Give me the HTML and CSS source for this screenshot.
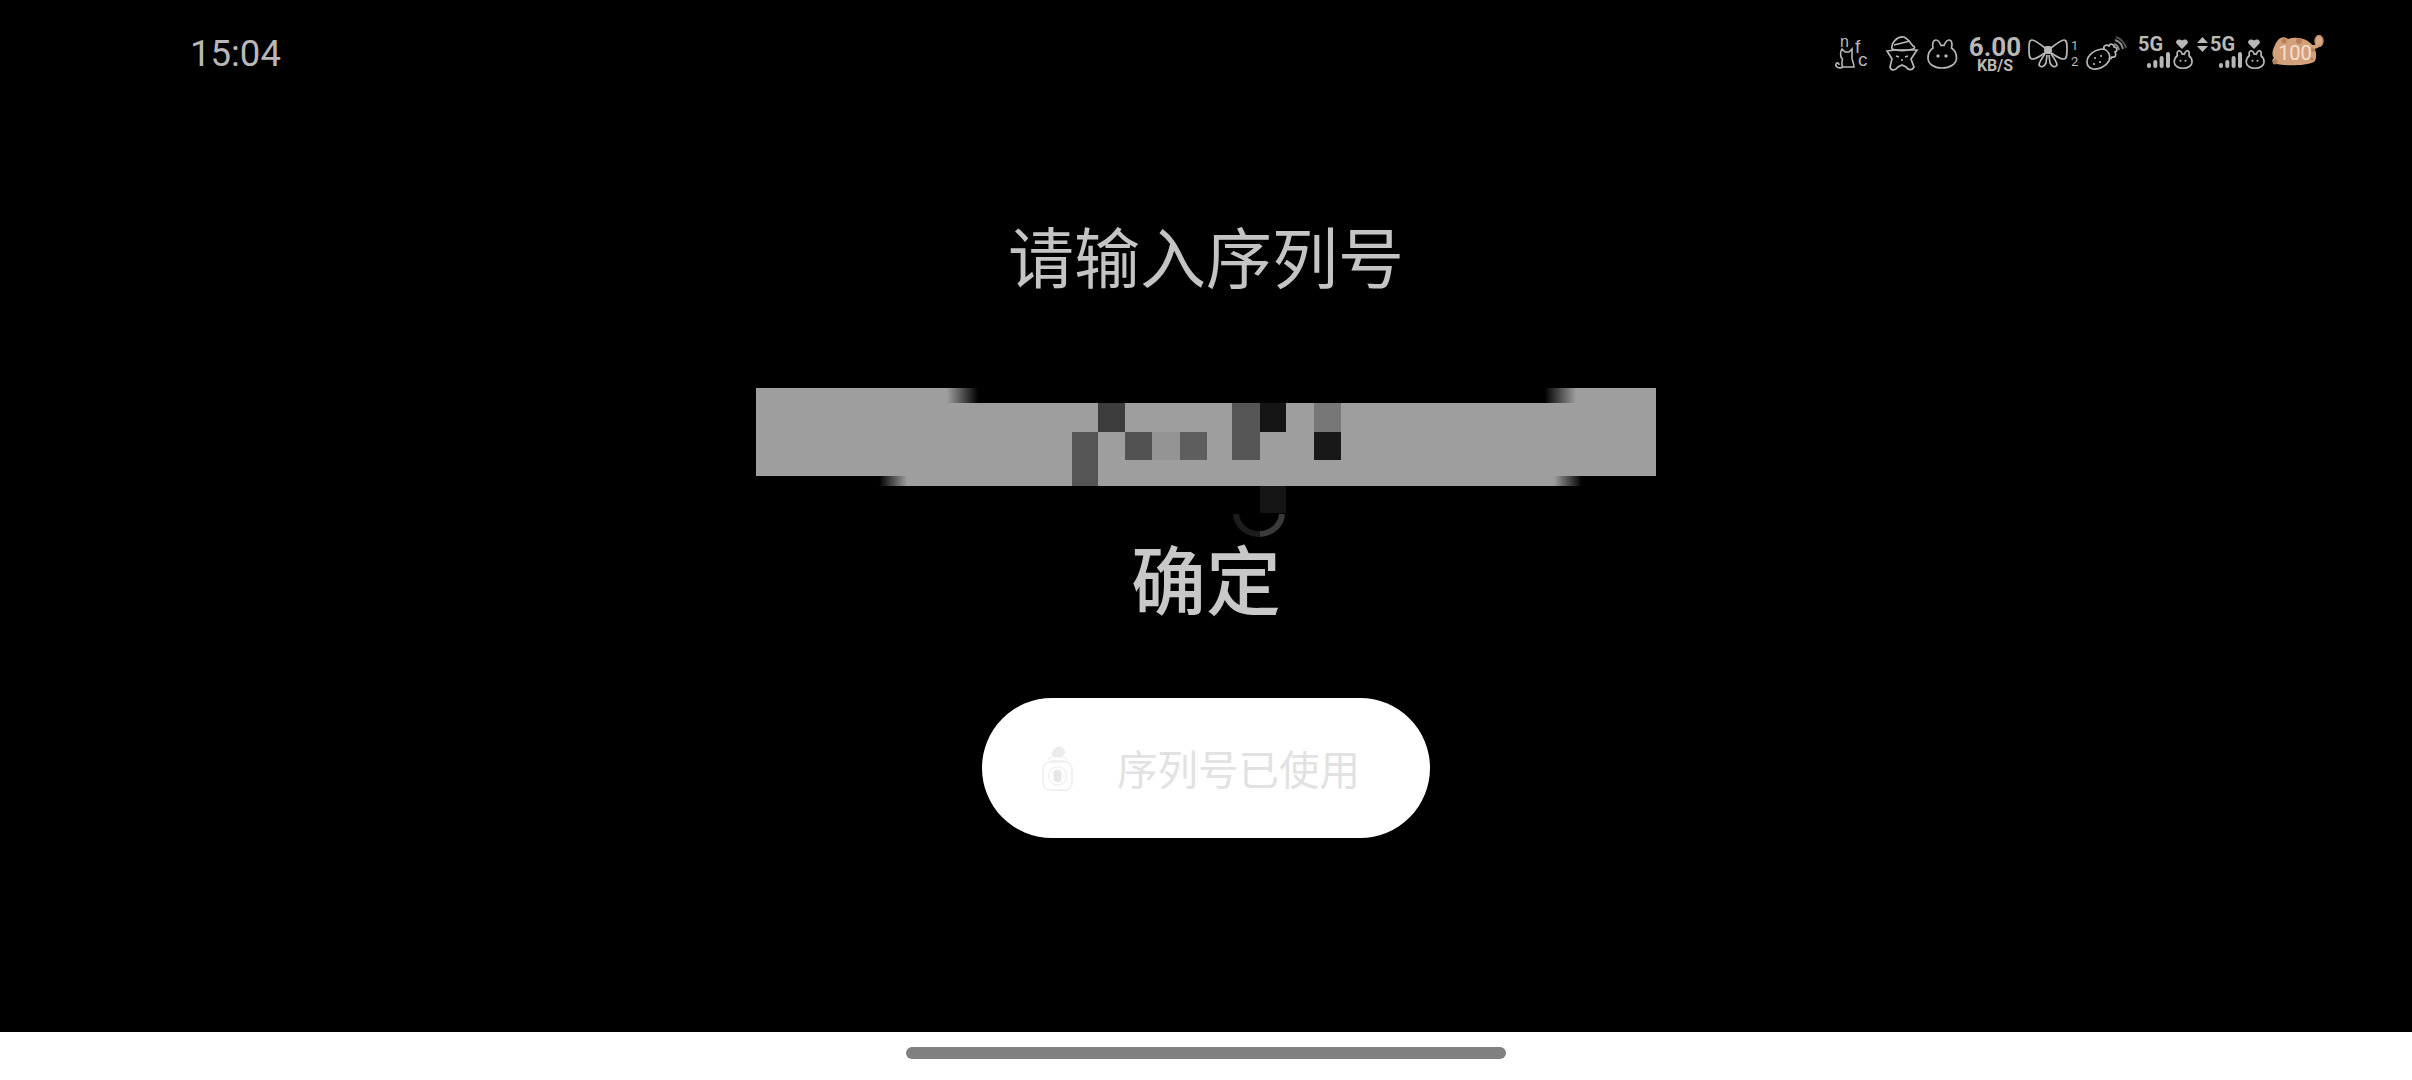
FILE: index.html
```html
<!DOCTYPE html>
<html lang="zh-CN">
<head>
  <meta charset="UTF-8">
  <meta name="viewport" content="width=device-width, initial-scale=1.0">
  <title>请输入序列号</title>
  <link rel="stylesheet" href="styles.css">
</head>
<body>

  <svg class="defs" width="0" height="0">
    <symbol id="bunny" viewBox="0 0 32 30">
      <path d="M2 19C2 14 4 11 7 9C6 5 7 1 10 1C12 1 14 4 15 6.500C16 6.300 17 6.300 18 6.500C19 4 21 1 23 1C26 1 26.500 5 25.500 9C28.500 11 30.500 14 30.500 19C30.500 25 24 29 16 29C8 29 2 25 2 19Z" fill="none" stroke="currentColor" stroke-width="1.700" vector-effect="non-scaling-stroke"/>
      <circle cx="12" cy="17" r="1.700" fill="currentColor"/>
      <circle cx="20" cy="17" r="1.700" fill="currentColor"/>
    </symbol>
    <symbol id="bars" viewBox="0 0 23 16">
      <rect x="0" y="11" width="4" height="5" rx="2" fill="currentColor"/>
      <rect x="6.300" y="8" width="4" height="8" rx="2" fill="currentColor"/>
      <rect x="12.600" y="4" width="4" height="12" rx="2" fill="currentColor"/>
      <rect x="19" y="0" width="4" height="16" rx="2" fill="currentColor"/>
    </symbol>
  </svg>

  <div class="screen">
    <div class="status">
      <span class="time">15:04</span>
      <div class="status-icons">
        <!-- nfc cat -->
        <svg class="icon" width="32" height="38" viewBox="0 0 32 38">
          <text class="tiny" x="5" y="12" font-size="16">n</text>
          <text class="tiny" x="20" y="18" font-size="19">f</text>
          <text class="tiny" x="23" y="31" font-size="19">c</text>
          <path d="M7 14L10 17H14L17 14V23C17 26 19 28 19 32H8C6 30 7 27 7.500 24C5 22 5 17 7 14ZM8 32C4 34 0 32 1 29C2 27 4 28 4 30" fill="none" stroke="currentColor" stroke-width="1.600"/>
        </svg>
        <!-- witch star -->
        <svg class="icon star" width="32" height="38" viewBox="0 0 32 38">
          <path d="M6 14C5 8 11 1 18 2C21 3 24 7 27 11C29 11 29 14 27 14C20 16 12 16 6 14Z" fill="none" stroke="currentColor" stroke-width="1.700"/>
          <path d="M8 10L24 6M1 16L9 15L23 15L31 15L25 24L28 32C26 36 22 35 20 32L16 30L12 32C9 36 5 36 4 32L6 24Z" fill="none" stroke="currentColor" stroke-width="1.700"/>
          <path d="M10 21L13 22M19 22L22 21M15 25H17" stroke="currentColor" stroke-width="1.400" fill="none"/>
        </svg>
        <svg class="icon bunny" width="32" height="30"><use href="#bunny"/></svg>
        <div class="speed">
          <span class="speed-num">6.00</span>
          <span class="speed-unit">KB/S</span>
        </div>
        <!-- bow -->
        <svg class="icon bow" width="38" height="38" viewBox="0 0 38 38">
          <path d="M16 13C11 9 6 5 3 5C0 5 0 9 0 14C0 19 0 24 3 24C8 24 12 20 16 18ZM22 13C27 9 32 5 35 5C38 5 38 9 38 14C38 19 38 24 35 24C30 24 26 20 22 18Z" fill="none" stroke="currentColor" stroke-width="1.700"/>
          <rect x="15.500" y="11" width="7" height="8" rx="2" fill="currentColor"/>
          <path d="M16 19C13 23 10 27 10 30C12 33 15 32 17 28L18 20M22 19C25 23 28 27 28 30C26 33 23 32 21 28L20 20" fill="none" stroke="currentColor" stroke-width="1.700"/>
        </svg>
        <div class="sim-nums"><span>1</span><span>2</span></div>
        <!-- strawberry wifi -->
        <svg class="icon berry" width="40" height="38" viewBox="0 0 40 38">
          <path d="M1 27C1 20 9 14 18 14C23 16 25 21 23 26C20 31 13 35 7 34C3 33 1 30 1 27Z" fill="none" stroke="currentColor" stroke-width="1.700"/>
          <path d="M18 14C17 11 20 9 23 11C24 8 28 9 28 12C31 12 32 16 29 17C31 20 29 23 26 22C25 24 24 24 23 23" fill="none" stroke="currentColor" stroke-width="1.700"/>
          <circle cx="9" cy="23" r="1.100" fill="currentColor"/><circle cx="15" cy="21" r="1.100" fill="currentColor"/>
          <circle cx="8" cy="29" r="1.100" fill="currentColor"/><circle cx="14" cy="27" r="1.100" fill="currentColor"/>
          <path d="M28 9A8 8 0 0 1 33 15M29 5A12 12 0 0 1 37 14" fill="none" stroke="#8c8c8c" stroke-width="1.900"/>
          <path d="M30 2A16 16 0 0 1 40 13" fill="none" stroke="#505050" stroke-width="1.900"/>
        </svg>
        <!-- sim 1 -->
        <svg class="icon sim" width="55" height="38" viewBox="0 0 55 38">
          <text class="sim-label" x="0" y="16">5G</text>
          <use href="#bars" x="9" y="17" width="23" height="16"/>
          <path d="M44 14L38.500 8.500C37 5 41 3 44 5.500C47 3 51 5 49.500 8.500Z" fill="currentColor"/>
          <use href="#bunny" x="35" y="15" width="20" height="19"/>
        </svg>
        <!-- sim 2 -->
        <svg class="icon sim-two" width="68" height="38" viewBox="0 0 68 38">
          <path d="M5.500 2L11 8H0ZM5.500 17L0 11H11Z" fill="currentColor"/>
          <text class="sim-label" x="13" y="16">5G</text>
          <use href="#bars" x="22" y="17" width="23" height="16"/>
          <path d="M57 14L51.500 8.500C50 5 54 3 57 5.500C60 3 64 5 62.500 8.500Z" fill="currentColor"/>
          <use href="#bunny" x="48" y="15" width="20" height="19"/>
        </svg>
        <!-- battery cat -->
        <svg class="icon battery" width="53" height="38" viewBox="0 0 53 38">
          <path d="M4 10C7 3 12 0 17 4C25 1 37 3 42 11C46 15 46 25 43 27C35 31 14 31 6 29C1 28 0 25 3 23C0 19 2 14 4 10Z" fill="#d3a07c"/>
          <ellipse cx="48" cy="6" rx="4" ry="5.500" fill="#d8a884" stroke="#b98a68" stroke-width="1.500"/>
          <path d="M41 12C45 12 47 11 47 9" fill="none" stroke="#d3a07c" stroke-width="4"/>
          <circle cx="13" cy="6" r="2.500" fill="#bc8058"/><circle cx="28" cy="6" r="3" fill="#bc8058"/>
          <circle cx="42" cy="15" r="2" fill="#bc8058"/><circle cx="41" cy="24" r="1.500" fill="#bc8058"/>
          <circle cx="4" cy="27" r="2.500" fill="#b08360"/>
          <text class="battery-num" x="24" y="25">100</text>
        </svg>
      </div>
    </div>

    <h1 class="title">请输入序列号</h1>

    <!-- the serial number is painted over in the shot -->
    <svg class="mask" width="902" height="150" viewBox="0 0 902 150">
      <defs>
        <linearGradient id="notch">
          <stop offset="0" stop-color="#000" stop-opacity="0"/>
          <stop offset="0.05" stop-color="#000"/>
          <stop offset="0.95" stop-color="#000"/>
          <stop offset="1" stop-color="#000" stop-opacity="0"/>
        </linearGradient>
        <linearGradient id="lip">
          <stop offset="0" stop-color="#9e9e9e" stop-opacity="0"/>
          <stop offset="0.04" stop-color="#9e9e9e"/>
          <stop offset="0.96" stop-color="#9e9e9e"/>
          <stop offset="1" stop-color="#9e9e9e" stop-opacity="0"/>
        </linearGradient>
      </defs>
      <rect x="1" y="0" width="900" height="88" fill="#9e9e9e"/>
      <rect x="192" y="0" width="629" height="15" fill="url(#notch)"/>
      <rect x="124" y="88" width="703" height="10" fill="url(#lip)"/>
      <rect x="343" y="15" width="27" height="29" fill="#3c3c3c"/>
      <rect x="317" y="44" width="26" height="54" fill="#555"/>
      <rect x="370" y="44" width="27" height="28" fill="#525252"/>
      <rect x="397" y="44" width="28" height="28" fill="#949494"/>
      <rect x="425" y="44" width="27" height="28" fill="#5e5e5e"/>
      <rect x="477" y="15" width="28" height="57" fill="#555"/>
      <rect x="505" y="15" width="26" height="29" fill="#141414"/>
      <rect x="559" y="15" width="27" height="29" fill="#777"/>
      <rect x="559" y="44" width="27" height="28" fill="#181818"/>
      <rect x="505" y="98" width="26" height="27" fill="#141414"/>
      <path d="M481 126A23 21 0 0 0 505 146" fill="none" stroke="#1c1c1c" stroke-width="6"/>
      <path d="M505 146A23 21 0 0 0 527 126" fill="none" stroke="#3a3a3a" stroke-width="6"/>
    </svg>

    <div class="confirm">确定</div>

    <div class="toast">
      <svg class="toast-icon" width="31" height="47" viewBox="0 0 31 47">
        <path d="M10 11C9 5 14 0 20 2C24 4 24 9 21 11C18 13 13 13 10 11Z" fill="#ececf0"/>
        <path d="M6 14L10 12M25 14L21 12M9 16H22" stroke="#f0f0f2" stroke-width="1.500" fill="none"/>
        <rect x="1" y="17" width="29" height="28" rx="7" fill="none" stroke="#eeeeee" stroke-width="1.500"/>
        <circle cx="15.500" cy="31" r="9" fill="none" stroke="#eeeeee" stroke-width="1.200"/>
        <rect x="11.500" y="25" width="8" height="12" rx="3" fill="#e6e6e6"/>
      </svg>
      <span class="toast-text">序列号已使用</span>
    </div>
  </div>

  <div class="nav-area">
    <div class="home-bar"></div>
  </div>

</body>
</html>
```

FILE: styles.css
```css
:root {
  --status-color: #b8b8b8;
  --cjk-font: "Noto Sans CJK SC", "Noto Sans", sans-serif;
}

html,
body {
  margin: 0;
  padding: 0;
  background-color: #fff;
}

.defs {
  position: absolute;
}

.screen {
  height: 1032px;
  background-color: #000;
  display: flex;
  flex-direction: column;
  align-items: center;
  overflow: hidden;
}

/* Status bar */
.status {
  width: 100%;
  height: 108px;
  box-sizing: border-box;
  padding: 0 88px 0 190px;
  display: flex;
  justify-content: space-between;
  align-items: center;
  color: var(--status-color);
}

.time {
  margin-top: 1px;
  font-family: "Roboto", sans-serif;
  font-size: 36.500px;
  line-height: 1;
  color: var(--status-color);
}

.status-icons {
  display: flex;
  align-items: center;
}

.icon {
  display: block;
  overflow: visible;
}

.star {
  margin-left: 19px;
}

.bunny {
  margin-left: 8px;
}

.speed {
  width: 52px;
  margin-left: 11px;
  display: flex;
  flex-direction: column;
  align-items: center;
  font-family: "Roboto", sans-serif;
  font-weight: 700;
}

.speed-num {
  font-size: 26px;
  line-height: 23px;
}

.speed-unit {
  font-size: 16px;
  line-height: 13px;
}

.bow {
  margin-left: 8px;
}

.sim-nums {
  width: 7px;
  margin-left: 4px;
  display: flex;
  flex-direction: column;
  gap: 6px;
  font-family: "Roboto", sans-serif;
  font-size: 13px;
  line-height: 10px;
}

.berry {
  margin-left: 8px;
}

.sim {
  margin-left: 12px;
}

.sim-two {
  margin-left: 4px;
}

.battery {
  margin-left: 6px;
}

.tiny {
  font-family: "Liberation Sans", sans-serif;
  fill: currentColor;
}

.sim-label {
  font-family: "Roboto", sans-serif;
  font-size: 20px;
  font-weight: 700;
  fill: currentColor;
}

.battery-num {
  font-family: "Roboto", sans-serif;
  font-size: 20px;
  text-anchor: middle;
  fill: #f5dfce;
}

/* Main content */
.title {
  margin: 113px 0 0;
  font-family: var(--cjk-font);
  font-size: 66px;
  font-weight: 400;
  line-height: 66px;
  color: #c4c4c4;
}

.mask {
  display: block;
  margin-top: 101px;
}

.confirm {
  margin-top: 1px;
  font-family: var(--cjk-font);
  font-size: 75px;
  font-weight: 500;
  line-height: 75px;
  color: #c8c8c8;
}

.toast {
  width: 448px;
  height: 140px;
  margin-top: 84px;
  box-sizing: border-box;
  padding-left: 60px;
  display: flex;
  align-items: center;
  gap: 44px;
  background-color: #fff;
  border-radius: 70px;
}

.toast-text {
  font-family: var(--cjk-font);
  font-size: 40.500px;
  line-height: 1;
  color: #e2e2e2;
}

/* Bottom nav */
.nav-area {
  height: 48px;
  background-color: #fff;
  display: flex;
  justify-content: center;
  padding-top: 15px;
  box-sizing: border-box;
}

.home-bar {
  width: 600px;
  height: 12px;
  background-color: #808080;
  border-radius: 6px;
}
```
